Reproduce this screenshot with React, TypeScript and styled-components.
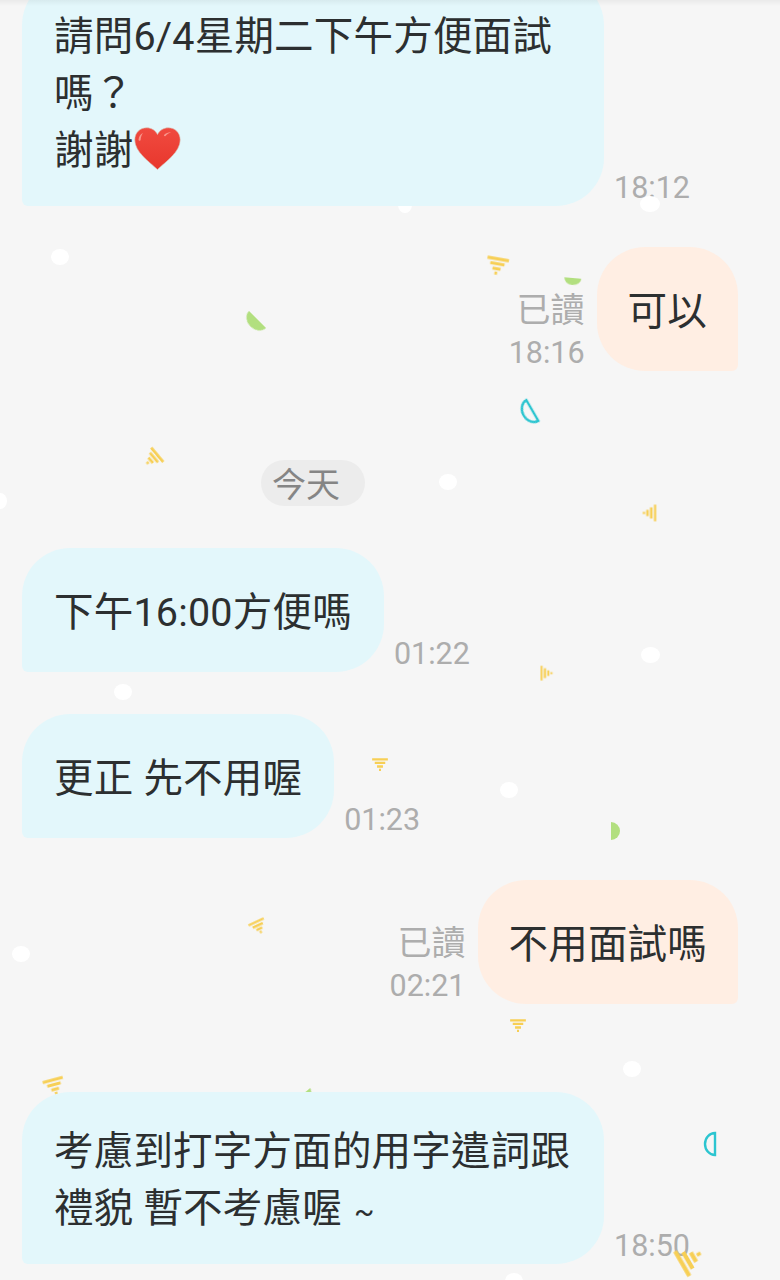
import React from "react";
import styled, { createGlobalStyle } from "styled-components";

const Global = createGlobalStyle`
  html, body { margin: 0; padding: 0; background: #f6f6f6; }
  * { box-sizing: border-box; }
`;

const Page = styled.main`
  position: relative;
  width: 780px;
  height: 1280px;
  overflow: hidden;
  background: #f6f6f6;
  padding: 0 42px 0 22px;
  font-family: Roboto, "Noto Sans CJK TC", sans-serif;
  &::before {
    content: "";
    position: absolute;
    inset: 0 0 auto 0;
    height: 6px;
    z-index: 3;
    background: linear-gradient(rgba(0, 0, 0, 0.05), rgba(0, 0, 0, 0));
  }
`;

const Thread = styled.section`
  display: flex;
  flex-direction: column;
  margin-top: -23px;
`;

const Row = styled.div<{ $mine?: boolean; $gap: number }>`
  display: flex;
  align-items: flex-end;
  justify-content: ${(p) => (p.$mine ? "flex-end" : "flex-start")};
  gap: ${(p) => (p.$mine ? 12 : 10)}px;
  margin-top: ${(p) => p.$gap}px;
`;

const Bubble = styled.div<{ $mine?: boolean; $tight?: boolean }>`
  position: relative;
  z-index: 2;
  max-width: 582px;
  min-height: 124px;
  padding: 31px ${(p) => (p.$tight ? 31 : 32)}px 27px;
  display: flex;
  align-items: center;
  font-size: 39.5px;
  line-height: 57px;
  letter-spacing: 0.2px;
  color: #2c2f30;
  background: ${(p) => (p.$mine ? "#ffeee3" : "#e3f7fb")};
  border-radius: ${(p) => (p.$mine ? "48px 48px 6px 48px" : "48px 48px 48px 6px")};
`;

const BubbleText = styled.div`
  min-width: 0;
`;

const Tilde = styled.span`
  display: inline-block;
  margin-left: 2px;
  font-size: 30px;
  line-height: 30px;
`;

const Meta = styled.div`
  display: flex;
  flex-direction: column;
  align-items: flex-end;
  margin-bottom: -1px;
  color: #adadad;
`;

const ReadMark = styled.span`
  font-size: 34px;
  line-height: 38px;
  margin-bottom: 5px;
`;

const Time = styled.span`
  font-size: 30.5px;
  line-height: 38px;
`;

const DatePill = styled.div`
  align-self: flex-start;
  margin: 89px 0 0 239px;
  height: 46px;
  padding: 0 25px 0 11px;
  border-radius: 23px;
  background: #ececec;
  color: #858585;
  font-size: 34px;
  line-height: 50px;
`;

const Heart = styled.svg`
  width: 47px;
  height: 43px;
  margin-left: 1px;
  vertical-align: -6px;
`;

const Bit = styled.svg<{ $x: number; $y: number; $w: number; $h: number; $r: number }>`
  position: absolute;
  z-index: 1;
  left: ${(p) => p.$x - p.$w / 2}px;
  top: ${(p) => p.$y - p.$h / 2}px;
  width: ${(p) => p.$w}px;
  height: ${(p) => p.$h}px;
  transform: rotate(${(p) => p.$r}deg);
  filter: blur(0.4px);
  overflow: visible;
`;

const Dot = styled.i<{ $x: number; $y: number; $w: number }>`
  position: absolute;
  z-index: 1;
  left: ${(p) => p.$x - p.$w / 2}px;
  top: ${(p) => p.$y - 8}px;
  width: ${(p) => p.$w}px;
  height: 16px;
  border-radius: 50%;
  background: #ffffff;
`;

const dots = [
  [60, 257, 18], [650, 204, 20], [405, 205, 14], [448, 482, 18], [0, 501, 14],
  [650, 655, 19], [123, 692, 18], [509, 790, 18], [21, 954, 18], [632, 1069, 18], [514, 1281, 18],
];

// x, y, size, rotation
const stripes = [
  [497, 266, 22, 10], [152, 459, 19, 50], [649, 513, 17, 90], [546, 673, 15, -90],
  [380, 765, 16, 0], [258, 927, 17, -25], [518, 1026, 16, 0], [54, 1087, 21, -15], [690, 1259, 29, -120],
];

// x, y, chord, depth, rotation
const greens = [
  [254, 323, 24, 10, 135], [572, 281, 17, 7, 95], [615, 831, 18, 9, 0], [307, 1093, 11, 5, 50],
];
const teals = [
  [528, 413, 24, 10, 150], [710, 1144, 22, 10, 180],
];

const halfPath = (c: number, d: number) => `M0 0A${d} ${c / 2} 0 0 1 0 ${c}Z`;

function Confetti() {
  return (
    <>
      {dots.map(([x, y, w]) => (
        <Dot key={`${x}-${y}`} $x={x} $y={y} $w={w} />
      ))}
      {stripes.map(([x, y, s, r]) => (
        <Bit key={`${x}-${y}`} $x={x} $y={y} $w={s} $h={s * 0.82} $r={r} viewBox="0 0 24 20">
          <path d="M0 2H24M4 7.500H20M7.500 13H16.500M10.500 18H13.500" stroke="#f7cf55" strokeWidth="3.500" fill="none" />
        </Bit>
      ))}
      {greens.map(([x, y, c, d, r]) => (
        <Bit key={`${x}-${y}`} $x={x} $y={y} $w={d} $h={c} $r={r} viewBox={`0 0 ${d} ${c}`}>
          <path d={halfPath(c, d)} fill="#b2df7f" />
        </Bit>
      ))}
      {teals.map(([x, y, c, d, r]) => (
        <Bit key={`${x}-${y}`} $x={x} $y={y} $w={d} $h={c} $r={r} viewBox={`0 0 ${d} ${c}`}>
          <path d={halfPath(c, d)} fill="none" stroke="#2cc5d0" strokeWidth="2.400" />
        </Bit>
      ))}
    </>
  );
}

function HeartIcon() {
  return (
    <Heart viewBox="0 0 47 43" aria-hidden="true">
      <defs>
        <linearGradient id="heartFill" x1="0" y1="0" x2="0" y2="1">
          <stop offset="0" stopColor="#f04a40" />
          <stop offset="1" stopColor="#e8372c" />
        </linearGradient>
      </defs>
      <path
        d="M23.500 42.500C15 34.500 .8 25 .8 12.800 .8 5.500 6.300 .8 12.600 .8c4.800 0 8.900 2.700 10.900 6.700C25.500 3.500 29.600 .8 34.400 .8c6.300 0 11.800 4.700 11.800 12 0 12.200-14.200 21.700-22.700 29.700Z"
        fill="url(#heartFill)"
        stroke="#d9c4b8"
        strokeWidth=".6"
      />
      <path d="M4.500 13C4.800 9.500 6.500 7 9 6 7.500 8 6.800 10.300 6.600 13 6 14.200 4.700 14 4.500 13Z" fill="#f8968c" />
      <path d="M30 8C32 6 34.500 5 37 5.200 34.800 6 33 7.200 31.500 9 30.700 9.500 29.700 8.800 30 8Z" fill="#f8968c" />
    </Heart>
  );
}

export default function App() {
  return (
    <Page>
      <Global />
      <Confetti />
      <Thread>
        <Row $gap={0}>
          <Bubble>
            <BubbleText>
              請問6/4星期二下午方便面試嗎？
              <br />
              謝謝
              <HeartIcon />
            </BubbleText>
          </Bubble>
          <Meta>
            <Time>18:12</Time>
          </Meta>
        </Row>
        <Row $mine $gap={41}>
          <Meta>
            <ReadMark>已讀</ReadMark>
            <Time>18:16</Time>
          </Meta>
          <Bubble $mine $tight>
            <BubbleText>可以</BubbleText>
          </Bubble>
        </Row>
        <DatePill>今天</DatePill>
        <Row $gap={42}>
          <Bubble>
            <BubbleText>下午16:00方便嗎</BubbleText>
          </Bubble>
          <Meta>
            <Time>01:22</Time>
          </Meta>
        </Row>
        <Row $gap={42}>
          <Bubble>
            <BubbleText>更正 先不用喔</BubbleText>
          </Bubble>
          <Meta>
            <Time>01:23</Time>
          </Meta>
        </Row>
        <Row $mine $gap={42}>
          <Meta>
            <ReadMark>已讀</ReadMark>
            <Time>02:21</Time>
          </Meta>
          <Bubble $mine $tight>
            <BubbleText>不用面試嗎</BubbleText>
          </Bubble>
        </Row>
        <Row $gap={88}>
          <Bubble>
            <BubbleText>
              考慮到打字方面的用字遣詞跟禮貌 暫不考慮喔 <Tilde>~</Tilde>
            </BubbleText>
          </Bubble>
          <Meta>
            <Time>18:50</Time>
          </Meta>
        </Row>
      </Thread>
    </Page>
  );
}
